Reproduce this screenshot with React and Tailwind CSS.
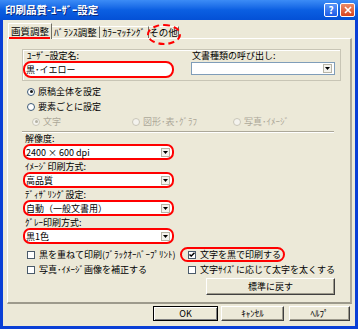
import React from 'react';

// --- small win-xp style controls ---
function Radio({ checked, disabled }) {
  return (
    <span className={`flex h-[8px] w-[8px] shrink-0 items-center justify-center rounded-full border ${disabled ? 'border-[#c9c6b8] bg-[#f4f3ee]' : 'border-[#3d5a78] bg-white'}`}>
      {checked && <span className={`h-[3px] w-[3px] rounded-full ${disabled ? 'bg-[#b5b2a4]' : 'bg-[#1a1a1a]'}`} />}
    </span>
  );
}

function Check({ checked }) {
  return (
    <span className="flex h-[8px] w-[8px] shrink-0 items-center justify-center border border-[#4a5a6a] bg-white">
      {checked && (
        <svg width="6" height="5" viewBox="0 0 6 5">
          <path d="M0.5 2.4L2.2 4.1L5.5 0.7" stroke="#000" strokeWidth="1.4" fill="none" />
        </svg>
      )}
    </span>
  );
}

function Arrow() {
  return (
    <span className="mr-[2px] flex h-[9px] w-[9px] shrink-0 items-center justify-center border border-[#b8b5a6] bg-[#f4f3ee]">
      <svg width="5" height="3" viewBox="0 0 5 3"><path d="M0 0h5L2.5 3z" fill="#000" /></svg>
    </span>
  );
}

// red annotation ring wrapping a dropdown
function RedSelect({ value }) {
  return (
    <div className="ml-[15px] flex h-[16px] w-[151px] items-center rounded-[7px] border-2 border-[#f00] bg-white">
      <span className="flex-1 pl-[1px]">{value}</span>
      <Arrow />
    </div>
  );
}

function Field({ label, value }) {
  return (
    <>
      <div className="flex h-[12px] items-center pl-[17px]">{label}</div>
      <RedSelect value={value} />
    </>
  );
}

function Btn({ children, className, primary }) {
  return (
    <div
      className={`flex items-center justify-center bg-[#ece9d8] ${primary ? 'border border-black shadow-[inset_1px_1px_0_#fff,inset_-1px_-1px_0_#808080]' : 'border border-t-white border-l-white border-r-[#404040] border-b-[#404040] shadow-[inset_-1px_-1px_0_#9d9a8c]'} ${className}`}
    >
      {children}
    </div>
  );
}

export default function App() {
  return (
    <div className="flex h-[329px] w-[358px] flex-col bg-[#0a3fd6] font-['Noto_Sans_CJK_JP',sans-serif] text-[9px] leading-none text-black">
      {/* Title bar */}
      <div className="flex h-[20px] items-center bg-gradient-to-b from-[#3c8cf6] via-[#0b5fe2] to-[#0450d6] pl-[5px] pr-[3px]">
        <span className="flex-1 text-[10.5px] font-bold text-white [text-shadow:1px_1px_0_#0a2a80]">印刷品質-ﾕｰｻﾞｰ設定</span>
        <div className="flex gap-[2px]">
          <div className="flex h-[14px] w-[14px] items-center justify-center rounded-[2px] border border-white bg-gradient-to-b from-[#5a96f8] to-[#1c5ae6] text-[10px] font-bold text-white">?</div>
          <div className="flex h-[14px] w-[15px] items-center justify-center rounded-[2px] border border-white bg-gradient-to-b from-[#ea8a66] to-[#d8431c]">
            <svg width="8" height="8" viewBox="0 0 8 8"><path d="M1 1L7 7M7 1L1 7" stroke="#fff" strokeWidth="1.6" /></svg>
          </div>
        </div>
      </div>

      {/* Client area */}
      <div className="mx-[3px] mb-[3px] flex flex-1 flex-col bg-[#ece9d8] pt-[3px]">
        {/* Tabs */}
        <div className="relative z-10 -mb-[1px] ml-[5px] flex h-[16px] items-end">
          <div className="relative flex h-[16px] w-[44px] items-center justify-center border-l border-t border-r border-l-white border-t-white border-r-[#716f64] bg-[#ece9d8] text-[9.5px]">
            画質調整
            <span className="absolute bottom-[0px] left-[0px] h-[2px] w-[41px] bg-[#f00]" />
          </div>
          <div className="mb-[1px] flex h-[12px] w-[48px] items-center justify-center border-t border-r border-t-white border-r-[#716f64] text-[9.5px]">ﾊﾞﾗﾝｽ調整</div>
          <div className="mb-[1px] flex h-[12px] w-[49px] items-center justify-center border-t border-r border-t-white border-r-[#716f64] text-[9.5px]">ｶﾗｰﾏｯﾁﾝｸﾞ</div>
          <div className="relative mb-[1px] flex h-[12px] w-[30px] items-center justify-center border-t border-r border-t-white border-r-[#716f64] text-[9.5px]">
            その他
            <span className="absolute -left-[2px] -top-[3px] h-[21px] w-[34px] rounded-[50%] border-2 border-dashed border-[#f00]" />
          </div>
        </div>

        {/* Panel */}
        <div className="ml-[4px] flex h-[266px] w-[345px] flex-col border-l border-t border-r-2 border-b-2 border-l-white border-t-white border-r-[#aca899] border-b-[#9d9a8c]">
          {/* user setting group */}
          <div className="ml-[14px] mt-[10px] flex h-[32px] w-[319px] border border-[#c8c5b5] shadow-[inset_1px_1px_0_#fff]">
            <div className="flex w-[151px] flex-col">
              <div className="flex h-[10px] items-end pl-[4px]">ﾕｰｻﾞｰ設定名:</div>
              <div className="mt-[1px] flex h-[17px] items-center rounded-[8px] border-2 border-[#f00] bg-white pl-[1px]">黒･イエロー</div>
            </div>
            <div className="ml-[17px] flex w-[144px] flex-col">
              <div className="flex h-[10px] items-end pl-[1px]">文書種類の呼び出し:</div>
              <div className="mt-[2px] flex h-[13px] items-center border border-[#7f9db9] bg-white">
                <span className="flex-1" />
                <Arrow />
              </div>
            </div>
          </div>

          {/* radios */}
          <div className="ml-[19px] mt-[3px] flex flex-col">
            <div className="flex h-[15px] items-center gap-[3px]"><Radio checked />原稿全体を設定</div>
            <div className="flex h-[15px] items-center gap-[3px]"><Radio />要素ごとに設定</div>
            <div className="flex h-[15px] items-center text-[#aca899]">
              <div className="ml-[5px] flex w-[100px] items-center gap-[3px]"><Radio checked disabled />文字</div>
              <div className="flex w-[101px] items-center gap-[3px]"><Radio disabled />図形･表･ｸﾞﾗﾌ</div>
              <div className="flex items-center gap-[3px]"><Radio disabled />写真･ｲﾒｰｼﾞ</div>
            </div>
          </div>

          {/* separator */}
          <div className="ml-[14px] mt-[2px] h-[2px] w-[312px] border-t border-b border-t-[#aca899] border-b-white" />

          {/* dropdown fields */}
          <div className="flex h-[11px] items-center pl-[17px]">解像度:</div>
          <RedSelect value="2400 × 600 dpi" />
          <Field label="ｲﾒｰｼﾞ印刷方式:" value="高品質" />
          <Field label="ﾃﾞｨｻﾞﾘﾝｸﾞ設定:" value="自動（一般文書用）" />
          <Field label="ｸﾞﾚｰ印刷方式:" value="黒1色" />

          {/* checkboxes */}
          <div className="mt-[3px] flex h-[15px] items-center">
            <div className="ml-[19px] flex w-[153px] items-center gap-[4px]"><Check />黒を重ねて印刷(ﾌﾞﾗｯｸｵｰﾊﾞｰﾌﾟﾘﾝﾄ)</div>
            <div className="flex h-[15px] w-[105px] items-center gap-[4px] rounded-[8px] border-2 border-[#f00] pl-[6px]"><Check checked />文字を黒で印刷する</div>
          </div>
          <div className="flex h-[15px] items-center">
            <div className="ml-[19px] flex w-[153px] items-center gap-[4px]"><Check />写真･ｲﾒｰｼﾞ画像を補正する</div>
            <div className="flex items-center gap-[4px] pl-[8px]"><Check />文字ｻｲｽﾞに応じて太字を太くする</div>
          </div>

          <Btn className="ml-[198px] mt-[1px] h-[17px] w-[129px]">標準に戻す</Btn>
        </div>

        {/* bottom buttons */}
        <div className="mt-[2px] flex justify-end pr-[5px]">
          <Btn primary className="h-[15px] w-[65px]">OK</Btn>
          <Btn className="ml-[3px] h-[15px] w-[63px]">ｷｬﾝｾﾙ</Btn>
          <Btn className="ml-[5px] h-[15px] w-[61px]">ﾍﾙﾌﾟ</Btn>
        </div>
      </div>
    </div>
  );
}
